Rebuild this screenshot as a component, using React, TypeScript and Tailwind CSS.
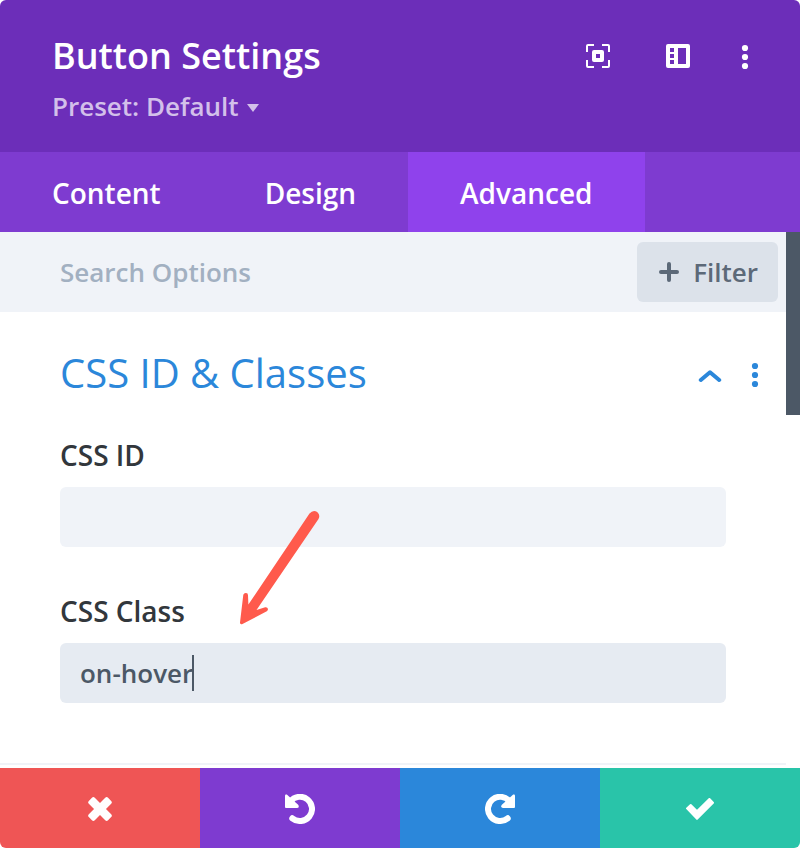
import { useState } from "react";
import type { ReactNode } from "react";

const TABS = [
  { id: "content", label: "Content" },
  { id: "design", label: "Design" },
  { id: "advanced", label: "Advanced" },
];

const FocusIcon = () => (
  <svg className="w-6 h-6" viewBox="0 0 24 24" fill="none" aria-hidden="true">
    <path
      d="M1 8V2a1 1 0 0 1 1-1h6M16 1h6a1 1 0 0 1 1 1v6M23 16v6a1 1 0 0 1-1 1h-6M8 23H2a1 1 0 0 1-1-1v-6"
      stroke="currentColor"
      strokeWidth={2}
    />
    <rect x="8" y="8" width="8" height="8" stroke="currentColor" strokeWidth={4} strokeLinejoin="round" />
  </svg>
);

const LayoutIcon = () => (
  <svg className="w-6 h-6" viewBox="0 0 24 24" fill="currentColor" aria-hidden="true">
    <path
      fillRule="evenodd"
      d="M2 0h20a2 2 0 0 1 2 2v20a2 2 0 0 1-2 2H2a2 2 0 0 1-2-2V2a2 2 0 0 1 2-2zM4 4v4h4V4zM4 10v4h4v-4zM4 16v4h4v-4zM12 4v16h8V4z"
    />
  </svg>
);

const DotsIcon = () => (
  <svg className="w-6 h-[26px]" viewBox="0 0 24 26" fill="currentColor" aria-hidden="true">
    <circle cx="12" cy="4" r="3.1" />
    <circle cx="12" cy="13" r="3.1" />
    <circle cx="12" cy="22" r="3.1" />
  </svg>
);

const UndoIcon = ({ className = "" }: { className?: string }) => (
  <svg className={`w-[30px] h-[30px] ${className}`} viewBox="0 0 30 30" aria-hidden="true">
    <path
      d="M5.5 7.3A12.1 12.1 0 1 1 7.3 24.3"
      fill="none"
      stroke="currentColor"
      strokeWidth={6}
      strokeLinecap="round"
    />
    <path
      d="M0 1.5Q0 0 1.8 0.5L13.4 11Q14.6 13.9 12 14H1Q0 14 0 13z"
      fill="currentColor"
    />
  </svg>
);

const CloseIcon = () => (
  <svg className="w-6 h-6" viewBox="0 0 24 24" fill="currentColor" aria-hidden="true">
    <rect x="-1.6" y="7.8" width="27.2" height="8.4" rx="2" transform="rotate(45 12 12)" />
    <rect x="-1.6" y="7.8" width="27.2" height="8.4" rx="2" transform="rotate(-45 12 12)" />
  </svg>
);

const CheckIcon = () => (
  <svg className="w-7 h-[22px]" viewBox="0 0 28 22" aria-hidden="true">
    <path
      d="M1 10.4L4.7 7L11 13.2L23.4 1L27 4.8L11 20.9z"
      fill="currentColor"
      stroke="currentColor"
      strokeWidth={2}
      strokeLinejoin="round"
    />
  </svg>
);

interface FooterButtonProps {
  label: string;
  color: string;
  children: ReactNode;
}

const FooterButton = ({ label, color, children }: FooterButtonProps) => (
  <button
    aria-label={label}
    className={`flex-1 h-20 pt-0.5 flex items-center justify-center text-white ${color}`}
  >
    {children}
  </button>
);

export default function App() {
  const [activeTab, setActiveTab] = useState("advanced");
  const [cssId, setCssId] = useState("");
  const [cssClass, setCssClass] = useState("on-hover");

  return (
    <div className="min-h-screen flex flex-col rounded-md overflow-hidden bg-white font-['Open_Sans',sans-serif]">
      <header className="flex items-start justify-between h-[152px] bg-[#6c2eb9] text-white pl-[52px] pr-7">
        <div className="pt-8">
          <h1 className="text-[36px] leading-[48px] font-semibold">Button Settings</h1>
          <button className="flex items-center gap-2 mt-2 text-[26px] leading-9 font-semibold text-[#d3c0ea]">
            Preset: Default
            <svg className="w-3 h-3" viewBox="0 0 12 12" fill="currentColor" aria-hidden="true">
              <path d="M0 4h12L6 12z" />
            </svg>
          </button>
        </div>
        <div className="flex items-start pt-11">
          <button aria-label="Expand" className="w-20 flex justify-center">
            <FocusIcon />
          </button>
          <button aria-label="Dock panel" className="w-20 flex justify-center">
            <LayoutIcon />
          </button>
          <button aria-label="More options" className="w-[54px] flex justify-center">
            <DotsIcon />
          </button>
        </div>
      </header>

      <nav className="flex h-20 bg-[#7e3bd0]">
        {TABS.map((tab) => (
          <button
            key={tab.id}
            onClick={() => setActiveTab(tab.id)}
            className={`px-[52px] pt-0.5 text-[28px] font-semibold text-white ${
              activeTab === tab.id ? "bg-[#8f42ec]" : ""
            }`}
          >
            {tab.label}
          </button>
        ))}
      </nav>

      <div className="flex flex-1">
        <main className="flex-1 min-w-0">
          <div className="flex items-center h-20 bg-[#f0f3f8] pl-[60px] pr-2">
            <input
              type="text"
              aria-label="Search Options"
              placeholder="Search Options"
              className="flex-1 min-w-0 bg-transparent text-[26px] font-semibold text-[#4c5866] placeholder:text-[#a2b0c1] outline-none"
            />
            <button className="flex items-center gap-3 h-[60px] px-5 rounded-md bg-[#dce2ea] text-[26px] font-semibold text-[#5c6978]">
              <svg
                className="w-6 h-6"
                viewBox="0 0 24 24"
                fill="none"
                stroke="currentColor"
                strokeWidth={4}
                strokeLinecap="round"
                aria-hidden="true"
              >
                <path d="M12 4v16M4 12h16" />
              </svg>
              Filter
            </button>
          </div>

          <section className="relative px-[60px] pb-[60px] border-b-2 border-[#f0f3f8]">
            <div className="flex items-center justify-between -mr-[41px] pt-[33px] text-[#2b87da]">
              <h2 className="text-[40px] leading-[56px]">CSS ID &amp; Classes</h2>
              <div className="flex items-center gap-[21px] pt-1">
                <button aria-label="Collapse section">
                  <svg
                    className="w-6 h-6"
                    viewBox="0 0 24 24"
                    fill="none"
                    stroke="currentColor"
                    strokeWidth={4}
                    strokeLinecap="round"
                    strokeLinejoin="round"
                    aria-hidden="true"
                  >
                    <path d="M2.8 17L12 9.2L21.2 17" />
                  </svg>
                </button>
                <button aria-label="Section options">
                  <DotsIcon />
                </button>
              </div>
            </div>

            <div className="pt-[34px]">
              <label htmlFor="css-id" className="block text-[28px] leading-10 font-semibold text-[#32373c]">
                CSS ID
              </label>
              <input
                id="css-id"
                type="text"
                value={cssId}
                onChange={(e) => setCssId(e.target.value)}
                className="block w-full h-[60px] mt-3 px-5 rounded-md bg-[#f0f3f8] text-[26px] font-semibold text-[#4c5866] outline-none"
              />
            </div>

            <div className="pt-11">
              <label htmlFor="css-class" className="block text-[28px] leading-10 font-semibold text-[#32373c]">
                CSS Class
              </label>
              <div className="relative mt-3">
                <input
                  id="css-class"
                  type="text"
                  value={cssClass}
                  onChange={(e) => setCssClass(e.target.value)}
                  className="block w-full h-[60px] px-5 rounded-md bg-[#e6ebf2] text-[26px] font-semibold text-[#4c5866] caret-transparent outline-none"
                />
                <span className="absolute left-[132px] top-3 w-0.5 h-9 bg-[#4c5866]" />
              </div>
            </div>

            {/* Pointer towards the CSS Class field */}
            <svg
              className="absolute left-60 top-[198px] w-20 h-[116px] pointer-events-none"
              viewBox="0 0 80 116"
              fill="#ff5a4c"
              aria-hidden="true"
            >
              <path d="M0 112.5L3.3 84.7Q4 82.8 6 83Q8.2 83.2 8 85.5L8.4 94.5L69.5 3.6Q73 -0.5 77.2 2Q80.6 5 78.5 9L16.5 100L25.2 97.2Q27.5 96.8 28 99Q28 100.4 26.8 101.2L2.5 114Q-0.2 115 0 112.5z" />
            </svg>
          </section>
        </main>

        {/* Scrollbar thumb */}
        <div className="w-3.5 h-[183px] bg-[#4c5866]" />
      </div>

      <footer className="flex">
        <FooterButton label="Discard changes" color="bg-[#ef5555]">
          <CloseIcon />
        </FooterButton>
        <FooterButton label="Undo" color="bg-[#7e3bd0]">
          <UndoIcon />
        </FooterButton>
        <FooterButton label="Redo" color="bg-[#2b87da]">
          <UndoIcon className="-scale-x-100" />
        </FooterButton>
        <FooterButton label="Save changes" color="bg-[#29c4a9]">
          <CheckIcon />
        </FooterButton>
      </footer>
    </div>
  );
}
